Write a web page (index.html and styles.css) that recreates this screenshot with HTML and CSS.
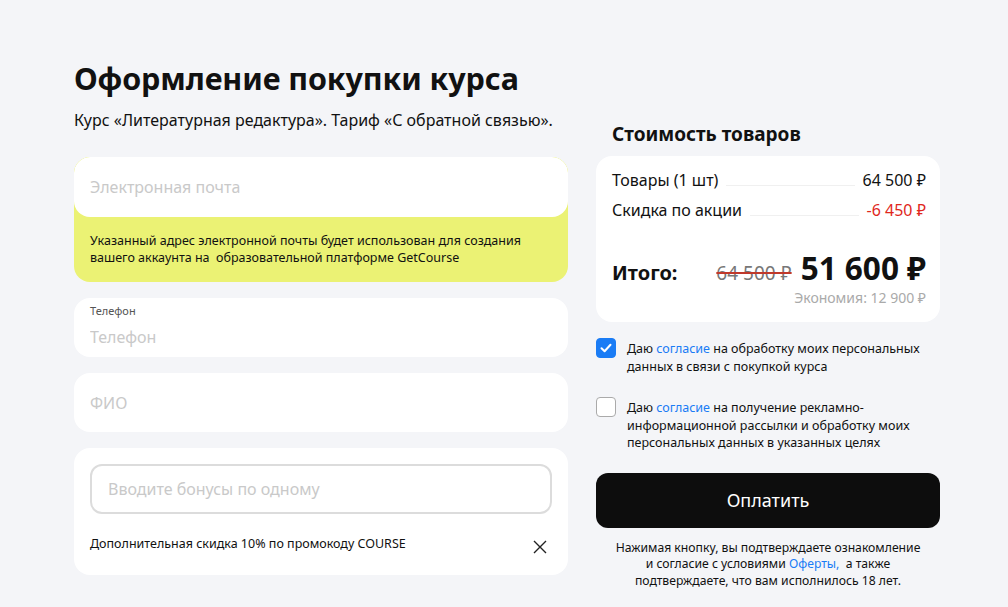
FILE: index.html
```html
<!DOCTYPE html>
<html lang="ru">
<head>
    <meta charset="UTF-8">
    <meta name="viewport" content="width=device-width, initial-scale=1.0">
    <title>Оформление покупки курса</title>
    <link rel="stylesheet" href="styles.css">
</head>
<body>
    <div class="page">
        <div class="main">
            <h1 class="title">Оформление покупки курса</h1>
            <p class="subtitle">Курс «Литературная редактура». Тариф «С обратной связью».</p>

            <div class="card email-card">
                <div class="field">
                    <input type="email" placeholder="Электронная почта">
                </div>
                <div class="notice">
                    Указанный адрес электронной почты будет использован для создания
                    вашего аккаунта на &nbsp;образовательной платформе GetCourse
                </div>
            </div>

            <div class="card field labeled">
                <label class="small-label">Телефон</label>
                <input type="tel" placeholder="Телефон">
            </div>

            <div class="card field">
                <input type="text" placeholder="ФИО">
            </div>

            <div class="card promo">
                <input class="promo-input" type="text" placeholder="Вводите бонусы по одному">
                <div class="promo-row">
                    <span>Дополнительная скидка 10% по промокоду COURSE</span>
                    <button class="close-btn" aria-label="Удалить">
                        <svg width="16" height="16" viewBox="0 0 16 16">
                            <path d="M2 2 L14 14 M14 2 L2 14" stroke="#222" stroke-width="1.4" fill="none"/>
                        </svg>
                    </button>
                </div>
            </div>
        </div>

        <div class="side">
            <h2 class="side-title">Стоимость товаров</h2>
            <div class="card summary">
                <div class="row">
                    <span>Товары (1 шт)</span>
                    <span class="dots"></span>
                    <span>64 500 ₽</span>
                </div>
                <div class="row">
                    <span>Скидка по акции</span>
                    <span class="dots"></span>
                    <span class="red">-6 450 ₽</span>
                </div>
                <div class="total">
                    <span class="total-label">Итого:</span>
                    <span class="old-price">64 500 ₽</span>
                    <span class="new-price">51 600 ₽</span>
                </div>
                <div class="economy">Экономия: 12 900 ₽</div>
            </div>

            <label class="check">
                <span class="box checked">
                    <svg width="14" height="14" viewBox="0 0 14 14">
                        <path d="M2.5 7.2 L5.6 10.2 L11.5 3.8" stroke="#fff" stroke-width="2" fill="none" stroke-linecap="round" stroke-linejoin="round"/>
                    </svg>
                </span>
                <span class="check-text">Даю <a href="#">согласие</a> на обработку моих персональных<br>данных в связи с покупкой курса</span>
            </label>

            <label class="check">
                <span class="box"></span>
                <span class="check-text">Даю <a href="#">согласие</a> на получение рекламно-<br>информационной рассылки и обработку моих<br>персональных данных в указанных целях</span>
            </label>

            <button class="pay-btn">Оплатить</button>

            <p class="terms">Нажимая кнопку, вы подтверждаете ознакомление<br>и согласие с условиями <a href="#">Оферты,</a>&nbsp; а также<br>подтверждаете, что вам исполнилось 18 лет.</p>
        </div>
    </div>
</body>
</html>
```

FILE: styles.css
```css
* {
    box-sizing: border-box;
    margin: 0;
    padding: 0;
    font-family: "Noto Sans", Arial, sans-serif;
}

body {
    background: #f4f5f8;
    color: #111;
}

.page {
    display: flex;
    gap: 28px;
    padding: 56px 0 0 74px;
}

.main {
    width: 494px;
    display: flex;
    flex-direction: column;
    gap: 16px;
}

.title {
    font-size: 30.5px;
    font-weight: 700;
    line-height: 44px;
    letter-spacing: -0.1px;
}

.subtitle {
    font-size: 16px;
    line-height: 20px;
    margin-top: -6px;
    margin-bottom: 11px;
}

.card {
    background: #fff;
    border-radius: 16px;
}

input {
    border: none;
    outline: none;
    background: transparent;
    font-size: 16px;
    color: #222;
    width: 100%;
}

input::placeholder {
    color: #c9c9c9;
}

.email-card {
    background: #ebf274;
    overflow: hidden;
}

.email-card .field {
    background: #fff;
    border-radius: 16px;
    height: 60px;
    padding: 0 16px;
    display: flex;
    align-items: center;
}

.notice {
    font-size: 12.5px;
    line-height: 17px;
    padding: 15px 16px 16px;
}

.field {
    height: 59px;
    padding: 0 16px;
    display: flex;
    align-items: center;
}

.field.labeled {
    flex-direction: column;
    align-items: stretch;
    justify-content: flex-start;
    padding-top: 6px;
}

.small-label {
    font-size: 11px;
    color: #555;
    line-height: 14px;
}

.labeled input {
    margin-top: 8px;
}

.promo {
    padding: 16px 16px 16px;
}

.promo-input {
    height: 50px;
    border: 2px solid #dcdcdc;
    border-radius: 12px;
    padding: 0 16px;
}

.promo-row {
    display: flex;
    justify-content: space-between;
    align-items: flex-start;
    margin-top: 21px;
    font-size: 12.5px;
    line-height: 17px;
}

.close-btn {
    border: none;
    background: none;
    padding: 0;
    margin-top: 4px;
    margin-right: 4px;
    cursor: pointer;
}

.side {
    width: 344px;
    padding-top: 65px;
}

.side-title {
    font-size: 19px;
    font-weight: 700;
    line-height: 26px;
    padding-left: 16px;
    margin-bottom: 9px;
}

.summary {
    padding: 9px 14px 16px 16px;
}

.row {
    display: flex;
    align-items: baseline;
    font-size: 16px;
    line-height: 30px;
}

.dots {
    flex: 1;
    border-bottom: 1px solid #f0f0f0;
    margin: 0 8px;
}

.red {
    color: #e0271c;
}

.total {
    display: flex;
    align-items: baseline;
    margin-top: 23px;
}

.total-label {
    font-size: 20px;
    font-weight: 700;
    flex: 1;
}

.old-price {
    font-size: 19px;
    color: #777;
    text-decoration: line-through;
    text-decoration-color: #c0392b;
    text-decoration-thickness: 2px;
    margin-right: 9px;
}

.new-price {
    font-size: 31.5px;
    font-weight: 700;
    line-height: 40px;
}

.economy {
    text-align: right;
    font-size: 14px;
    line-height: 16px;
    color: #aaa;
    margin-top: 2px;
}

.check {
    display: flex;
    gap: 11px;
    margin-top: 16px;
    font-size: 12.5px;
    line-height: 17.5px;
    cursor: pointer;
}

.check + .check {
    margin-top: 22px;
}

.box {
    flex: none;
    width: 20px;
    height: 20px;
    border: 1px solid #aaa;
    border-radius: 4px;
    background: #fff;
    display: flex;
    align-items: center;
    justify-content: center;
}

.box.checked {
    background: #1a7cf5;
    border-color: #1a7cf5;
}

.check-text {
    padding-top: 2px;
}

a {
    color: #1a7cf5;
    text-decoration: none;
}

.pay-btn {
    display: block;
    width: 100%;
    height: 55px;
    margin-top: 21px;
    background: #0d0d0d;
    color: #fff;
    border: none;
    border-radius: 12px;
    font-size: 18px;
    cursor: pointer;
}

.terms {
    text-align: center;
    font-size: 12.2px;
    line-height: 16.5px;
    margin-top: 12px;
}
```
